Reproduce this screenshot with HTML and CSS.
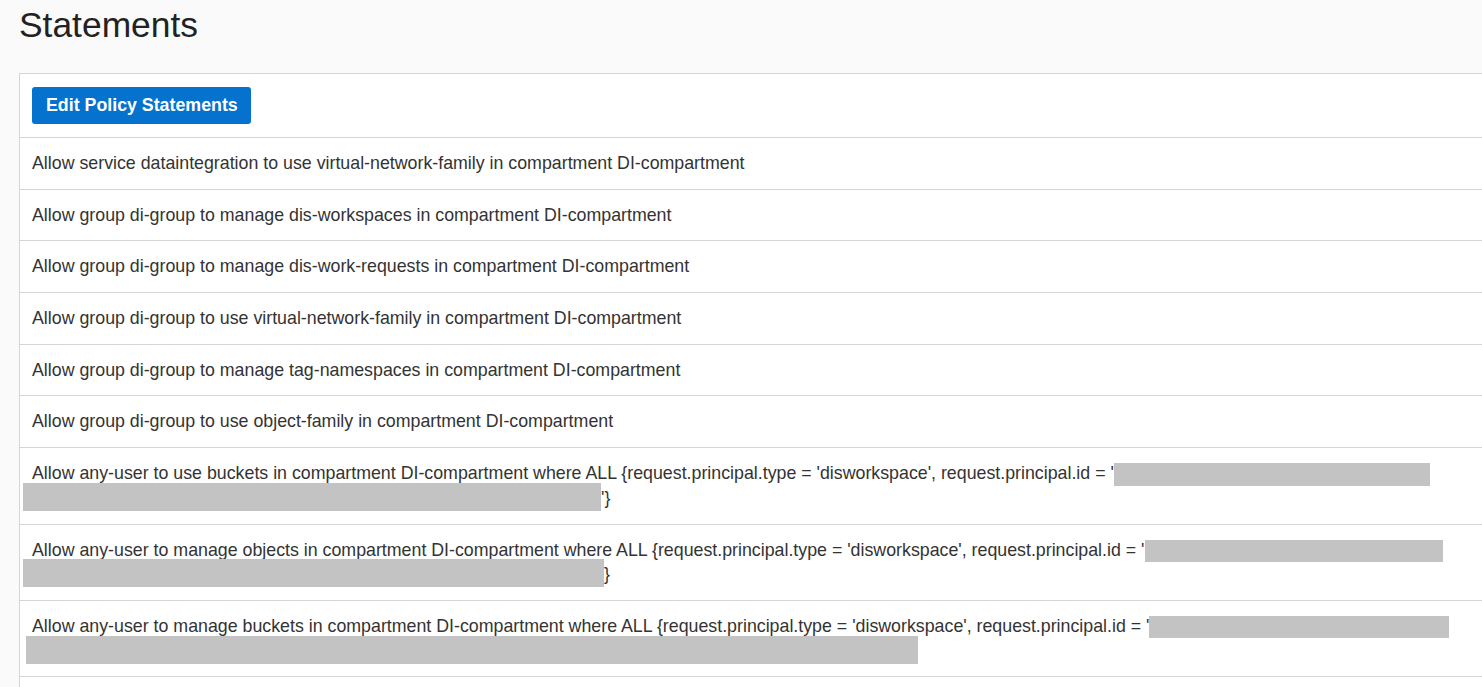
FILE: index.html
```html
<!DOCTYPE html>
<html lang="en">
<head>
<meta charset="utf-8">
<title>Statements</title>
<link rel="stylesheet" href="styles.css">
</head>
<body>
<div class="page">
  <h1 class="title">Statements</h1>
  <div class="panel">
    <div class="toolbar">
      <button class="btn-primary" type="button">Edit Policy Statements</button>
    </div>
    <div class="row"><div class="line">Allow service dataintegration to use virtual-network-family in compartment DI-compartment</div></div>
    <div class="row"><div class="line">Allow group di-group to manage dis-workspaces in compartment DI-compartment</div></div>
    <div class="row"><div class="line">Allow group di-group to manage dis-work-requests in compartment DI-compartment</div></div>
    <div class="row"><div class="line">Allow group di-group to use virtual-network-family in compartment DI-compartment</div></div>
    <div class="row"><div class="line">Allow group di-group to manage tag-namespaces in compartment DI-compartment</div></div>
    <div class="row"><div class="line">Allow group di-group to use object-family in compartment DI-compartment</div></div>
    <div class="row">
      <div class="line">Allow any-user to use buckets in compartment DI-compartment where ALL {request.principal.type = 'disworkspace', request.principal.id = '<span class="redact redact-head r7a"></span></div>
      <div class="line"><span class="redact redact-tail r7b"></span>'}</div>
    </div>
    <div class="row">
      <div class="line">Allow any-user to manage objects in compartment DI-compartment where ALL {request.principal.type = 'disworkspace', request.principal.id = '<span class="redact redact-head r8a"></span></div>
      <div class="line"><span class="redact redact-tail r8b"></span>}</div>
    </div>
    <div class="row">
      <div class="line">Allow any-user to manage buckets in compartment DI-compartment where ALL {request.principal.type = 'disworkspace', request.principal.id = '<span class="redact redact-head r9a"></span></div>
      <div class="line"><span class="redact redact-tail redact-tail-in r9b"></span></div>
    </div>
    <div class="row"><div class="line">&nbsp;</div></div>
  </div>
</div>
</body>
</html>
```

FILE: styles.css
```css
html, body {
  margin: 0;
  padding: 0;
  overflow: hidden;
  background: #fafafa;
}

body {
  font-family: "Liberation Sans", Arial, sans-serif;
  color: #333333;
}

.page {
  padding: 8px 0 0 19px;
}

.title {
  margin: 0 0 30px 0;
  font-size: 35.4px;
  line-height: 35px;
  font-weight: normal;
  color: #222222;
}

.panel {
  background: #ffffff;
  border: 1px solid #d3d6d9;
  border-right: none;
  margin-right: -20px;
}

.toolbar {
  padding: 13px 12px 13px 12px;
}

.btn-primary {
  display: block;
  height: 37px;
  padding: 0 13px 0 14px;
  border: none;
  border-radius: 3px;
  background: #0572ce;
  color: #ffffff;
  font-family: "Liberation Sans", Arial, sans-serif;
  font-size: 17.8px;
  font-weight: bold;
  line-height: 37px;
  cursor: pointer;
}

.row {
  border-top: 1px solid #d3d6d9;
  padding: 13px 12px 13px 12px;
  font-size: 17.8px;
  line-height: 24.7px;
  white-space: nowrap;
}

.line {
  height: 24.7px;
}

.redact {
  display: inline-block;
  vertical-align: top;
  background: #c3c3c3;
}

.redact-head {
  height: 22.5px;
  margin-top: 2px;
}

.redact-tail {
  height: 28px;
  margin: -3px 0 -1px -9px;
}

.redact-tail-in {
  margin-left: -6px;
}

.r7a { width: 316px; }
.r8a { width: 298px; }
.r9a { width: 300px; }
.r7b { width: 578px; }
.r8b { width: 581px; }
.r9b { width: 892px; }
```
